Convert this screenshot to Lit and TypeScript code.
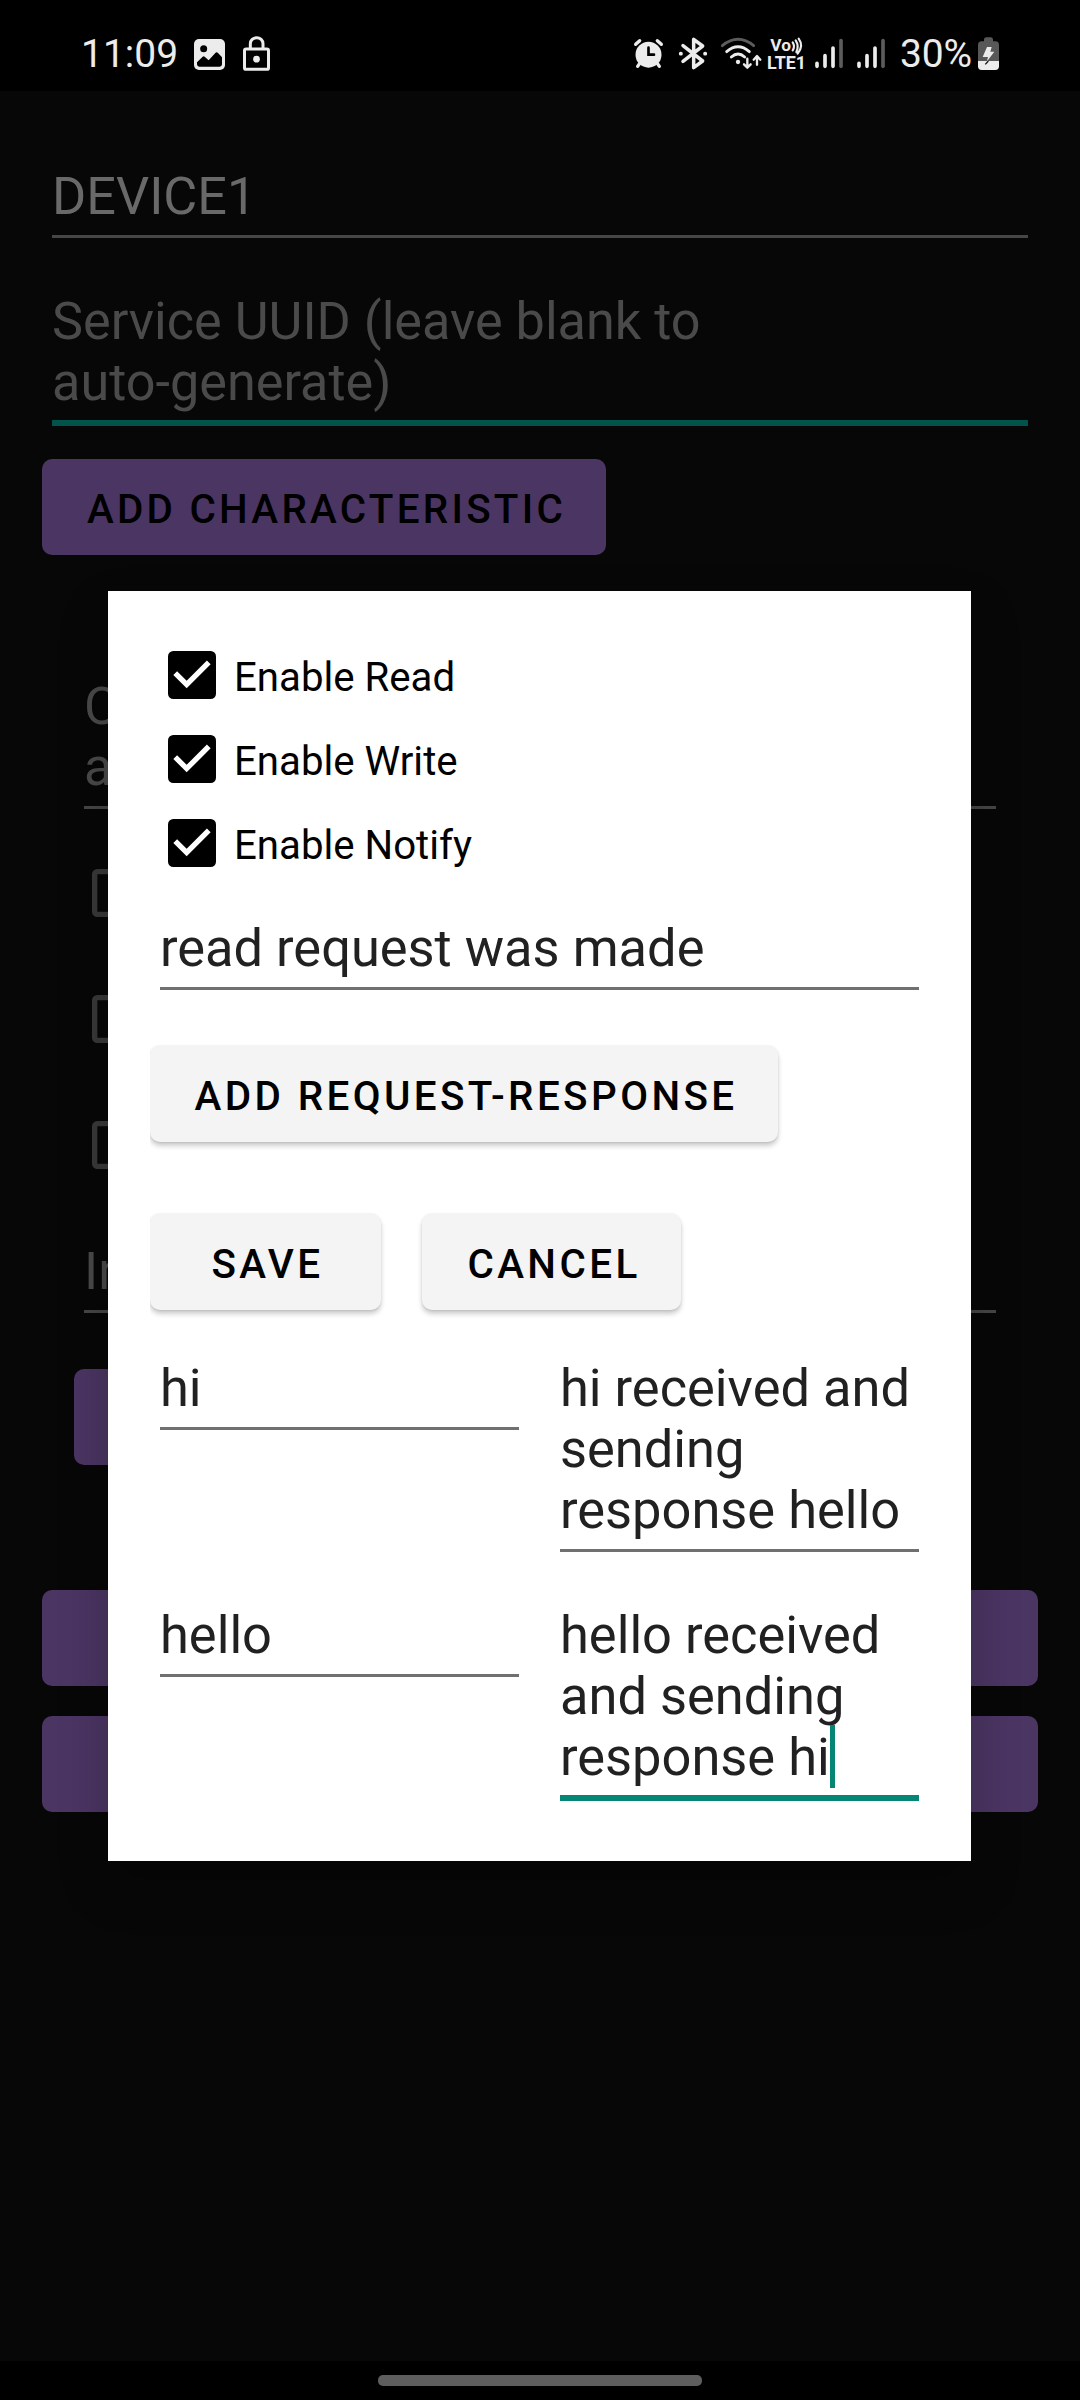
import { LitElement, html, svg, css } from "lit";
import { customElement, property } from "lit/decorators.js";

@customElement("status-bar")
class StatusBar extends LitElement {
  static styles = css`
    :host {
      display: flex;
      box-sizing: border-box;
      height: 91px;
      padding: 16px 81px 0 81px;
      background: #000;
      color: #ececec;
      font-family: Roboto, sans-serif;
      justify-content: space-between;
    }
    .group { display: flex; align-items: center; height: 75px; }
    .clock, .percent { font-size: 39px; line-height: 46px; white-space: nowrap; }
    .clock { width: 113px; }
    .percent { width: 78px; margin-left: 15px; letter-spacing: -0.2px; }
    svg { display: block; flex: none; overflow: visible; }
    .photo { margin-right: 18px; }
    .alarm { margin-right: 16px; }
    .bt { margin-right: 14px; }
    .wifi { margin-right: 6px; }
    .volte { margin-right: 8px; }
    .sig { margin-right: 14px; }
    .sig.last { margin-right: 0; }
  `;

  signal(cls: string) {
    return html`<svg class=${cls} width="28" height="33" viewBox="0 81 84 99" fill="none" stroke="#ececec" stroke-width="11" stroke-linecap="round">
      <path d="M6 160V169M30 137V169M54 114V169" /><path d="M78 92V169" stroke="#5c5c5c" />
    </svg>`;
  }

  render() {
    return html`
      <div class="group">
        <span class="clock">11:09</span>
        <svg class="photo" width="31" height="35" viewBox="402 78 93 105">
          <rect x="402" y="87" width="93" height="93" rx="15" fill="#ececec" />
          <circle cx="431" cy="116" r="10.5" fill="#000" />
          <path d="M411 157L428 140Q431 137 434 140L446 151L466 129Q470 125 474 129L486 142V163Q486 170 479 170H418Q411 170 411 163Z" fill="#000" />
        </svg>
        <svg width="27" height="35" viewBox="549 78 81 105" fill="none" stroke="#ececec" stroke-width="9">
          <path d="M571 116V101A18 17 0 0 1 609 101V116" />
          <rect x="553.5" y="117" width="72" height="61" rx="5" />
          <circle cx="589.500" cy="147.500" r="10" fill="#ececec" stroke="none" />
        </svg>
      </div>
      <div class="group">
        <svg class="alarm" width="29" height="33" viewBox="72 81 87 99" fill="none" stroke="#ececec" stroke-width="10" stroke-linecap="round">
          <circle cx="115.500" cy="134" r="39" fill="#ececec" stroke="none" />
          <path d="M77 103L89 92M154 103L142 92M89 160L83 169M142 160L148 169" />
          <path d="M115.500 113V134H132" stroke="#000" stroke-width="8" />
        </svg>
        <svg class="bt" width="28" height="33" viewBox="206 81 84 99" fill="none" stroke="#ececec" stroke-width="10.500" stroke-linecap="round" stroke-linejoin="round">
          <path d="M218 107L277 153L250 173V88L277 108L218 154" />
          <path d="M211 131H212M284 131H285" stroke-width="11" />
        </svg>
        <svg class="wifi" width="40" height="33" viewBox="333 81 120 99" fill="none" stroke="#ececec" stroke-width="8.500" stroke-linecap="round" stroke-linejoin="round">
          <path d="M337 107Q384 69 431 107" stroke="#5c5c5c" />
          <path d="M350 125Q384 96 418 125M364 141Q384 123 404 141" />
          <circle cx="384" cy="156" r="6.500" fill="#ececec" stroke="none" />
          <path d="M412 146V172M402 163L412 173L422 163M441 164V140M431 149L441 138L451 149" stroke-width="7" />
        </svg>
        <svg class="volte" width="40" height="33" viewBox="471 81 120 99" fill="#ececec" font-family="Roboto, sans-serif" font-weight="700">
          <text x="481" y="122" font-size="49" textLength="62" lengthAdjust="spacingAndGlyphs">Vo</text>
          <path d="M548 97Q556 109 548 121M557 91Q568 108 559 126M566 86Q582 108 563 131" fill="none" stroke="#ececec" stroke-width="6.500" stroke-linecap="round" />
          <text x="471" y="177" font-size="54" textLength="117" lengthAdjust="spacingAndGlyphs">LTE1</text>
        </svg>
        ${this.signal("sig")} ${this.signal("sig last")}
        <span class="percent">30%</span>
        <svg width="21" height="33" viewBox="1104 81 63 99">
          <path d="M1122 90Q1122 82 1129 82H1142Q1149 82 1149 90V94H1156Q1167 94 1167 105V153H1104V105Q1104 94 1115 94H1122Z" fill="#585858" />
          <path d="M1104 153H1167V169Q1167 180 1156 180H1115Q1104 180 1104 169Z" fill="#ececec" />
          <path d="M1131 111H1145L1141 125H1153L1130 155L1134 141H1118Z" fill="#ececec" />
          <path d="M1135 153L1126 163" stroke="#111" stroke-width="4" />
        </svg>
      </div>
    `;
  }
}

@customElement("text-field")
class TextField extends LitElement {
  @property() text = "";
  @property({ type: Boolean }) caret = false;

  static styles = css`
    :host { display: block; font: 400 52.200px/61px Roboto, sans-serif; color: var(--ink, #212121); }
    .field { padding: 0 0 8px; border-bottom: 3px solid var(--line, #707070); white-space: pre-line; }
    :host([focused]) .field { padding-bottom: 7px; border-bottom: 6px solid var(--focus, #058675); }
    .anchor { position: relative; }
    .caret { position: absolute; left: 0; top: -1px; width: 5px; height: 63px; background: #058675; }
  `;

  render() {
    return html`<div class="field">${this.text}${this.caret ? html`<span class="anchor"><i class="caret"></i></span>` : ""}</div>`;
  }
}

@customElement("check-row")
class CheckRow extends LitElement {
  @property() label = "";
  @property({ type: Boolean }) checked = false;

  static styles = css`
    :host { display: flex; align-items: center; font: 400 40.200px/47px Roboto, sans-serif; color: #000; }
    svg { display: block; flex: none; margin-right: 18px; }
    span { position: relative; top: 2px; white-space: nowrap; }
  `;

  render() {
    return html`<svg width="48" height="48" viewBox="3 3 18 18">
        ${this.checked
          ? svg`<rect x="3" y="3" width="18" height="18" rx="2" fill="#000" /><path d="M10 17l-5-5 1.410-1.410L10 14.170l7.590-7.590L19 8z" fill="#fff" />`
          : svg`<rect x="4" y="4" width="16" height="16" rx="1" fill="none" stroke="#393939" stroke-width="2" />`}
      </svg><span>${this.label}</span>`;
  }
}

@customElement("app-root")
class AppRoot extends LitElement {
  static styles = css`
    :host {
      display: flex;
      flex-direction: column;
      position: relative;
      width: 1080px;
      height: 2400px;
      overflow: hidden;
      background: #070707;
      font-family: Roboto, sans-serif;
    }
    .page { flex: 1; padding: 75px 42px 0; --ink: #4a4a4a; --line: #464646; --focus: #02534b; }
    .page text-field { margin: 0 10px; }
    .page .name { --ink: #696969; }
    .page .service { margin-top: 53px; }
    .btn {
      display: flex;
      align-items: center;
      justify-content: center;
      box-sizing: border-box;
      height: 96px;
      border-radius: 10px;
      background: #4b3563;
      color: #000;
      font-size: 40.400px;
      line-height: 47px;
      font-weight: 500;
      letter-spacing: 3.250px;
      padding: 5px 0 0 5px;
      white-space: nowrap;
    }
    .add { width: 564px; margin-top: 33px; }
    .card { padding: 121px 32px 0; }
    .checks { margin: 21px 0 33px; padding-left: 18px; }
    .checks check-row { height: 126px; }
    .card .btn { width: 500px; margin-top: 56px; }
    .wide { margin-top: 125px; }
    .wide + .wide { margin-top: 30px; }
    .nav { height: 39px; display: flex; justify-content: center; background: #000; }
    .pill { width: 324px; height: 11px; margin-top: 14px; border-radius: 5px; background: #5e5e5e; }

    .dialog {
      position: absolute;
      left: 108px;
      top: 591px;
      width: 863px;
      height: 1270px;
      box-sizing: border-box;
      padding: 42px 42px 0;
      background: #fff;
      box-shadow: 0 24px 44px rgba(0, 0, 0, 0.25);
    }
    .dialog check-row { height: 84px; padding-left: 18px; }
    .dialog text-field { margin: 0 10px; font-size: 52.400px; }
    .read { padding-top: 33px; }
    .dialog .btn {
      height: 97px;
      background: #f4f4f4;
      letter-spacing: 3.400px;
      padding-left: 4px;
      box-shadow: 0 4px 5px rgba(0, 0, 0, 0.2), 0 1px 2px rgba(0, 0, 0, 0.08);
    }
    .dialog .edge { clip-path: inset(-3px -12px -14px 0); }
    .request { width: 628px; margin-top: 55px; }
    .actions { display: flex; gap: 41px; margin-top: 71px; }
    .save { width: 231px; }
    .dialog .cancel { width: 259px; padding-left: 5px; }
    .pairs { display: grid; grid-template-columns: 359px 359px; column-gap: 41px; row-gap: 53px; margin: 48px 10px 0; align-items: start; }
    .dialog .pairs text-field { margin: 0; }
  `;

  render() {
    return html`
      <status-bar></status-bar>
      <div class="page">
        <text-field class="name" text="DEVICE1"></text-field>
        <text-field class="service" focused text=${"Service UUID (leave blank to\nauto-generate)"}></text-field>
        <div class="btn add">ADD CHARACTERISTIC</div>
        <div class="card">
          <text-field text=${"C\na"}></text-field>
          <div class="checks">
            <check-row></check-row>
            <check-row></check-row>
            <check-row></check-row>
          </div>
          <text-field text="In"></text-field>
          <div class="btn"></div>
        </div>
        <div class="btn wide"></div>
        <div class="btn wide"></div>
      </div>
      <div class="nav"><div class="pill"></div></div>

      <div class="dialog">
        <check-row checked label="Enable Read"></check-row>
        <check-row checked label="Enable Write"></check-row>
        <check-row checked label="Enable Notify"></check-row>
        <div class="read"><text-field text="read request was made"></text-field></div>
        <div class="btn request edge">ADD REQUEST-RESPONSE</div>
        <div class="actions">
          <div class="btn save edge">SAVE</div>
          <div class="btn cancel">CANCEL</div>
        </div>
        <div class="pairs">
          <text-field text="hi"></text-field>
          <text-field text=${"hi received and\nsending\nresponse hello"}></text-field>
          <text-field text="hello"></text-field>
          <text-field focused caret text=${"hello received\nand sending\nresponse hi"}></text-field>
        </div>
      </div>
    `;
  }
}
